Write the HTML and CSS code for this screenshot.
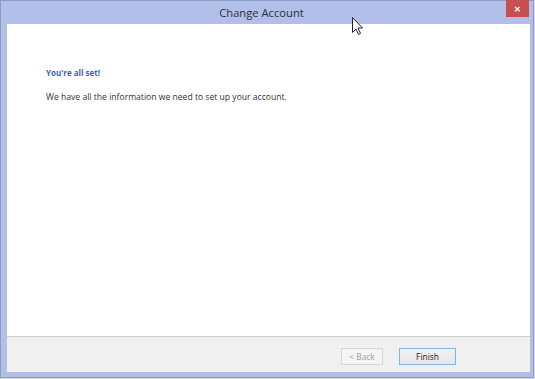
FILE: index.html
```html
<!DOCTYPE html>
<html lang="en">
<head>
    <meta charset="UTF-8">
    <title>Change Account</title>
    <link rel="stylesheet" href="styles.css">
</head>
<body>
    <div class="window">
        <div class="titlebar">
            <span class="title">Change Account</span>
            <span class="close">&#x2715;</span>
        </div>
        <div class="client">
            <div class="content">
                <p class="heading">You're all set!</p>
                <p class="info">We have all the information we need to set up your account.</p>
            </div>
            <div class="footer">
                <button class="btn" disabled>&lt; Back</button>
                <button class="btn primary">Finish</button>
            </div>
        </div>
        <!-- mouse pointer over the title bar -->
        <svg class="cursor" width="12" height="19" viewBox="0 0 12 19">
            <path d="M0.5 0.5 L0.5 15.5 L4 12 L6.5 17.5 L8.5 16.5 L6 11 L10.5 11 Z" fill="#fff" stroke="#222" stroke-width="1"/>
        </svg>
    </div>
</body>
</html>
```

FILE: styles.css
```css
*{
    margin: 0;
    padding: 0;
    box-sizing: border-box;
}
body{
    width: 535px;
    height: 379px;
    background: #d9d9d9;
    font-family: "Open Sans", "Noto Sans", sans-serif;
}
.window{
    position: relative;
    display: flex;
    flex-direction: column;
    width: 534px;
    height: 378px;
    padding: 0 3px 5px 6px;
    background: #b2bfe8;
    border: 1px solid #8f9bc6;
}
.titlebar{
    position: relative;
    height: 23px;
    padding-right: 14px;
    text-align: center;
    line-height: 24px;
    font-size: 11.2px;
    color: #2a2f3a;
}
.close{
    position: absolute;
    top: -1px;
    right: 1px;
    width: 23px;
    height: 17px;
    background: #c74f4f;
    color: #fff;
    font-size: 8px;
    font-weight: bold;
    line-height: 17px;
    text-align: center;
}
.client{
    flex: 1;
    display: flex;
    flex-direction: column;
}
.content{
    flex: 1;
    background: #fff;
    padding: 43px 39px;
    font-size: 8.6px;
}
.heading{
    color: #3a62c9;
    font-weight: bold;
    font-size: 8px;
    margin-bottom: 13px;
}
.info{
    color: #333;
}
.footer{
    display: flex;
    justify-content: flex-end;
    align-items: center;
    gap: 16px;
    height: 36px;
    padding-right: 74px;
    padding-top: 4px;
    background: #f0f0f0;
    border-top: 1px solid #cdcdcd;
}
.btn{
    width: 42px;
    height: 17px;
    font-family: inherit;
    font-size: 8.4px;
    color: #222;
    background: #ececec;
    border: 1px solid #d6d6d6;
}
.btn[disabled]{
    color: #a0a0a0;
    background: #f4f4f4;
}
.primary{
    width: 57px;
    border: 1px solid #7eb4ea;
    background: linear-gradient(#f2f2f2, #e6e6e6);
}
.cursor{
    position: absolute;
    top: 16px;
    left: 351px;
}
```
